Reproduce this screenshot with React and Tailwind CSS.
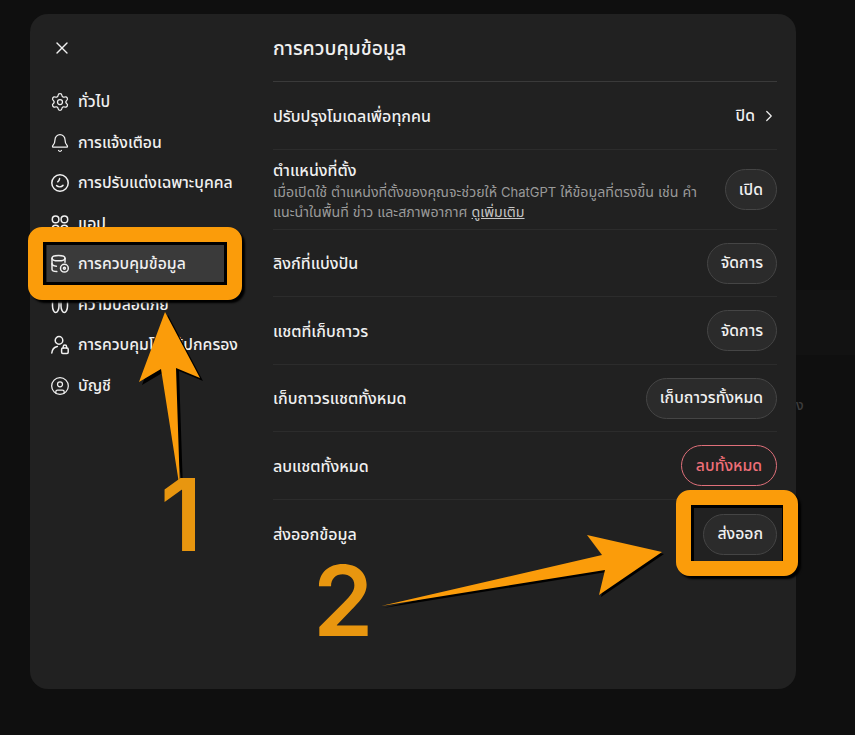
import React from 'react';
import { X, Settings, Bell, ChevronRight, CircleUser } from 'lucide-react';

const FONT = "font-['Inter','Noto_Sans','Noto_Sans_Thai','Liberation_Sans',sans-serif]";

const SmileClock = (props) => (
  <svg viewBox="0 0 20 20" fill="none" stroke="currentColor" strokeWidth="1.4" strokeLinecap="round" {...props}>
    <circle cx="10" cy="10" r="8.2" />
    <path d="M6.6 12.6c1.9 1.6 4.7 1.5 6.4-.2" />
    <path d="M9.6 5.6c-.2 1.4-.8 2.5-1.9 3.2" />
  </svg>
);

const AppsIcon = (props) => (
  <svg viewBox="0 0 20 20" fill="none" stroke="currentColor" strokeWidth="1.4" {...props}>
    <circle cx="5.6" cy="5.4" r="3.3" />
    <circle cx="14.4" cy="5.4" r="3.3" />
    <circle cx="5.6" cy="14.6" r="3.3" />
    <circle cx="14.4" cy="14.6" r="3.3" />
  </svg>
);

const DataIcon = (props) => (
  <svg viewBox="0 0 20 20" fill="none" stroke="currentColor" strokeWidth="1.3" strokeLinecap="round" {...props}>
    <ellipse cx="8.5" cy="4.2" rx="6.5" ry="2.6" />
    <path d="M2 4.2v11c0 1.4 2.2 2.3 4.8 2.4" />
    <path d="M15 4.2v4" />
    <path d="M2 9.8c0 1.3 2 2.2 4.4 2.4" />
    <circle cx="14.4" cy="14.2" r="3.9" />
    <circle cx="14.4" cy="14.2" r="1" />
  </svg>
);

// only the lower part shows below the orange frame
const SafetyIcon = (props) => (
  <svg viewBox="0 0 20 20" fill="none" stroke="currentColor" strokeWidth="1.4" strokeLinecap="round" {...props}>
    <path d="M2.5 2v9c0 3.5 1.6 6.5 3.2 6.5S9 14.500 9 11V2" />
    <path d="M11 2v9c0 3.500 1.700 6.500 3.300 6.500s3.200-3 3.200-6.500V2" />
  </svg>
);

const ParentIcon = (props) => (
  <svg viewBox="0 0 20 20" fill="none" stroke="currentColor" strokeWidth="1.4" strokeLinecap="round" {...props}>
    <circle cx="9" cy="5.4" r="3.8" />
    <path d="M1.8 18c.3-3.5 2.5-6 5.6-6.6" />
    <rect x="11.6" y="13" width="6.6" height="5.4" rx="1.2" />
    <path d="M13.2 13v-1.2a1.7 1.7 0 0 1 3.4 0V13" />
  </svg>
);

const navItems = [
  { label: 'ทั่วไป', icon: Settings },
  { label: 'การแจ้งเตือน', icon: Bell },
  { label: 'การปรับแต่งเฉพาะบุคคล', icon: SmileClock },
  { label: 'แอป', icon: AppsIcon },
  { label: 'การควบคุมข้อมูล', icon: DataIcon, active: true },
  { label: 'ความปลอดภัย', icon: SafetyIcon },
  { label: 'การควบคุมโดยผู้ปกครอง', icon: ParentIcon },
  { label: 'บัญชี', icon: CircleUser },
];

const PillButton = ({ children, danger }) => (
  <button
    className={
      danger
        ? 'h-[41px] px-[14px] rounded-full border border-[#e0707a] text-[#ef6f78] text-[15.75px] font-medium whitespace-nowrap'
        : 'h-[41px] px-[13px] rounded-full border border-[#454545] bg-[#2b2b2b] text-[#f0f0f0] text-[15.75px] font-medium whitespace-nowrap'
    }
  >
    {children}
  </button>
);

const Row = ({ label, children, h }) => (
  <div className={`flex items-center justify-between border-b border-[#2c2c2c] ${h}`}>
    <span className="text-[16px] font-medium text-[#f0f0f0]">{label}</span>
    {children}
  </div>
);

export default function App() {
  return (
    <div className={`relative h-[735px] w-[855px] overflow-hidden bg-[#0f0f0f] pt-[14px] pl-[30px] ${FONT}`}>
      {/* faint page content behind the dialog */}
      <div className="absolute left-[796px] top-[290px] h-[65px] w-[59px] bg-[#121212]" />
      <span className="absolute left-[796px] top-[394px] text-[14px] font-medium text-[#3d3d3d]">ง</span>

      {/* Settings dialog */}
      <div className="relative flex h-[675px] w-[766px] rounded-[18px] bg-[#212121]">
        <aside className="w-[243px] pl-[17px]">
          <div className="flex h-[68px] items-center pl-[5px]">
            <X className="h-[20px] w-[20px] text-[#f0f0f0]" strokeWidth={1.6} />
          </div>
          <nav className="w-[180px]">
            {navItems.map(({ label, icon: Icon, active }) => (
              <div
                key={label}
                className={`flex h-[40.5px] items-center gap-[8px] pl-[3px] whitespace-nowrap text-[15.75px] font-medium text-[#f0f0f0] ${active ? 'bg-[#3a3a3a]' : ''}`}
              >
                <Icon className="h-[20px] w-[20px] shrink-0" strokeWidth={1.5} />
                <span>{label}</span>
              </div>
            ))}
          </nav>
        </aside>

        <main className="w-[504px]">
          <div className="flex h-[68px] items-center border-b border-[#3a3a3a] pt-[3px] text-[19.500px] font-medium text-[#f0f0f0]">
            การควบคุมข้อมูล
          </div>
          <Row label="ปรับปรุงโมเดลเพื่อทุกคน" h="h-[68px]">
            <span className="mr-[-1px] flex items-center gap-[5px] text-[15.75px] font-medium text-[#f0f0f0]">
              ปิด
              <ChevronRight className="h-[18px] w-[18px]" strokeWidth={1.6} />
            </span>
          </Row>
          <div className="flex h-[80px] items-center justify-between border-b border-[#2c2c2c]">
            <div className="w-[440px]">
              <div className="text-[16px] leading-[24px] font-medium text-[#f0f0f0]">ตำแหน่งที่ตั้ง</div>
              <p className="text-[14.200px] leading-[19px] whitespace-nowrap text-[#9a9a9a]">
                เมื่อเปิดใช้ ตำแหน่งที่ตั้งของคุณจะช่วยให้ <span className="text-[13px]">ChatGPT</span> ให้ข้อมูลที่ตรงขึ้น เช่น คำ
                <br />
                แนะนำในพื้นที่ ข่าว และสภาพอากาศ{' '}
                <span className="text-[#c4c4c4] underline">ดูเพิ่มเติม</span>
              </p>
            </div>
            <PillButton>เปิด</PillButton>
          </div>
          <Row label="ลิงก์ที่แบ่งปัน" h="h-[67px]">
            <PillButton>จัดการ</PillButton>
          </Row>
          <Row label="แชตที่เก็บถาวร" h="h-[68px]">
            <PillButton>จัดการ</PillButton>
          </Row>
          <Row label="เก็บถาวรแชตทั้งหมด" h="h-[67px]">
            <PillButton>เก็บถาวรทั้งหมด</PillButton>
          </Row>
          <Row label="ลบแชตทั้งหมด" h="h-[68px]">
            <PillButton danger>ลบทั้งหมด</PillButton>
          </Row>
          <div className="flex h-[68px] items-center justify-between">
            <span className="text-[16px] font-medium text-[#f0f0f0]">ส่งออกข้อมูล</span>
            <PillButton>ส่งออก</PillButton>
          </div>
        </main>
      </div>

      {/* Orange annotations drawn over the screenshot */}
      <div className="absolute left-[28px] top-[227px] h-[73px] w-[214px] rounded-[14px] border-[15px] border-[#fb9c0a] shadow-[3px_3px_2px_#000]">
        <div className="h-full w-full border-[3px] border-black" />
      </div>
      <div className="absolute left-[676px] top-[490px] h-[86px] w-[122px] rounded-[14px] border-[15px] border-[#fb9c0a] shadow-[3px_3px_2px_#000]">
        <div className="h-full w-full border-t-[3px] border-l-[3px] border-r-[1px] border-black" />
      </div>
      <svg className="absolute inset-0" width="855" height="735" viewBox="0 0 855 735">
        <polygon points="168,315 203,381 179,371 183,490 164,372 142,385" fill="#000" />
        <polygon points="165,312 200,378 176,368 180,490 161,369 139,382" fill="#fb9c0a" />
        <polygon points="383,608 604,557 589,537 664,554 601,597 607,572" fill="#000" />
        <polygon points="381,606 602,555 587,535 662,552 599,595 605,570" fill="#fb9c0a" />
      </svg>
      <span className="absolute left-[160px] top-[456px] text-[100px] leading-[118px] font-semibold text-[#e8960f] font-['Inter',sans-serif]">
        1
      </span>
      <span className="absolute left-[313px] top-[542px] text-[97px] leading-[118px] font-semibold text-[#e8960f] font-['Inter',sans-serif]">
        2
      </span>
    </div>
  );
}
